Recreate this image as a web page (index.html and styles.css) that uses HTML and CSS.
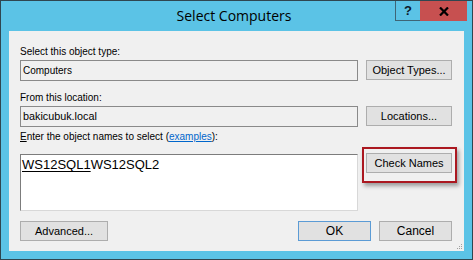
FILE: index.html
```html
<!DOCTYPE html>
<html lang="en">
<head>
  <meta charset="UTF-8" />
  <title>Select Computers</title>
  <link rel="stylesheet" href="styles.css">
</head>
<body>
  <div class="window">
    <div class="titlebar">
      <span></span>
      <span class="title">Select Computers</span>
      <div class="caption-btns">
        <div class="cap-help">?</div>
        <div class="cap-close">
          <svg width="10" height="9" viewBox="0 0 10 9">
            <path d="M1 0.5 L9 8.5 M9 0.5 L1 8.5" stroke="#000" stroke-width="2.2" />
          </svg>
        </div>
      </div>
    </div>

    <div class="client">
      <div class="label label-first">Select this object type:</div>
      <div class="row row-first">
        <div class="field">Computers</div>
        <button class="btn">Object Types...</button>
      </div>

      <div class="label label-second">From this location:</div>
      <div class="row row-second">
        <div class="field field-wide">bakicubuk.local</div>
        <button class="btn">Locations...</button>
      </div>

      <div class="label label-third"><u>E</u>nter the object names to select (<a href="#">examples</a>):</div>
      <div class="row row-names">
        <div class="names-box"><span class="resolved">WS12SQL1</span>WS12SQL2</div>
        <div class="highlight">
          <button class="btn">Check Names</button>
        </div>
      </div>

      <div class="row row-bottom">
        <button class="btn btn-advanced">Advanced...</button>
        <div class="spacer"></div>
        <button class="btn btn-dialog btn-default">OK</button>
        <button class="btn btn-dialog">Cancel</button>
      </div>

      <svg class="grip" width="7" height="7" viewBox="0 0 7 7">
        <rect x="5" y="1" width="1" height="1" fill="#a0a0a0" />
        <rect x="3" y="3" width="1" height="1" fill="#a0a0a0" />
        <rect x="5" y="3" width="1" height="1" fill="#a0a0a0" />
        <rect x="1" y="5" width="1" height="1" fill="#a0a0a0" />
        <rect x="3" y="5" width="1" height="1" fill="#a0a0a0" />
        <rect x="5" y="5" width="1" height="1" fill="#a0a0a0" />
      </svg>
    </div>
  </div>
</body>
</html>
```

FILE: styles.css
```css
body {
  margin: 0;
  font-family: "Liberation Sans", Arial, sans-serif;
  background: #ffffff;
}

.window {
  width: 473px;
  height: 260px;
  box-sizing: border-box;
  border: 1px solid #2f4650;
  background: #5bc3e6;
  display: flex;
  flex-direction: column;
}

.titlebar {
  height: 30px;
  display: grid;
  grid-template-columns: 1fr auto 1fr;
  align-items: start;
  padding-right: 5px;
}

.title {
  font-family: "Open Sans", "Noto Sans", sans-serif;
  font-size: 14px;
  line-height: 20px;
  padding-top: 5px;
  color: #000;
}

.caption-btns {
  justify-self: end;
  display: flex;
}

.cap-help {
  width: 24px;
  height: 19px;
  border: 1px solid #3e6576;
  border-top: none;
  border-right: none;
  font-size: 13px;
  font-weight: bold;
  line-height: 19px;
  text-align: center;
  color: #0c1a2a;
}

.cap-close {
  width: 47px;
  height: 20px;
  background: #c75050;
  display: flex;
  align-items: center;
  justify-content: center;
}

.client {
  position: relative;
  flex: 1;
  margin: 0 8px 8px 8px;
  background: #f0f0f0;
  padding: 14px 12px 10px 11px;
  display: flex;
  flex-direction: column;
}

.label {
  font-size: 10px;
  line-height: 13px;
  color: #000;
  white-space: nowrap;
}

.label a {
  color: #0066cc;
}

.label-second {
  margin-top: 10px;
}

.label-third {
  margin-top: 3px;
}

.row {
  display: flex;
  gap: 8px;
  align-items: flex-start;
}

.row-first,
.row-second {
  margin-top: 2px;
}

.row-names {
  margin-top: 11px;
}

.row-bottom {
  margin-top: 10px;
}

.field {
  flex: 1;
  height: 21px;
  box-sizing: border-box;
  border: 1px solid #8a8a8a;
  background: #f0f0f0;
  font-size: 10px;
  line-height: 19px;
  padding-left: 2px;
}

.field-wide {
  font-size: 10.8px;
}

.btn {
  width: 86px;
  height: 20px;
  box-sizing: border-box;
  border: 1px solid #adadad;
  background: #e1e1e1;
  font-family: "Liberation Sans", Arial, sans-serif;
  font-size: 11px;
  color: #000;
  padding: 0;
}

.names-box {
  flex: 1;
  height: 57px;
  box-sizing: border-box;
  border: 1px solid;
  border-color: #7c7c7c #d8d8d8 #d8d8d8 #7c7c7c;
  background: #ffffff;
  font-size: 13px;
  line-height: 16px;
  padding: 2px 0 0 1px;
}

.resolved {
  text-decoration: underline;
  text-decoration-thickness: 1px;
  text-underline-offset: 2px;
}

.highlight {
  margin: -7px -5px 0 -4px;
  border: 2px solid #ab1820;
  padding: 4px 3px 8px 2px;
  box-shadow: 2px 3px 4px rgba(0, 0, 0, 0.35);
}

.highlight .btn {
  display: block;
}

.btn-advanced {
  width: 88px;
}

.spacer {
  flex: 1;
}

.btn-dialog {
  width: 73px;
  font-size: 12px;
}

.btn-default {
  border-color: #5b9bd5;
}

.grip {
  position: absolute;
  right: 1px;
  bottom: 1px;
}
```
